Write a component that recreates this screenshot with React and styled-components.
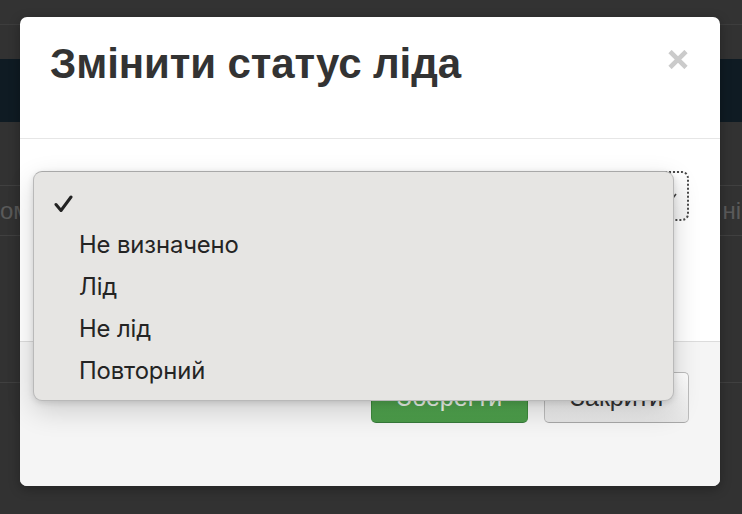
import React from "react";
import styled, { createGlobalStyle } from "styled-components";

const Global = createGlobalStyle`
  html, body { margin: 0; padding: 0; background: #323232; overflow: hidden; }
  * { box-sizing: border-box; }
`;

const Page = styled.div`
  position: relative;
  width: 742px;
  height: 514px;
  background: #323232;
  overflow: hidden;
  font-family: "Liberation Sans", Arial, sans-serif;
`;

const TopBar = styled.div`
  height: 25px;
  background: #333333;
  border-bottom: 1px solid #3d3d3d;
`;

const NavBand = styled.div`
  margin-top: 34px;
  height: 63px;
  background: #0f1b23;
`;

const TableRow = styled.div`
  margin-top: ${(p) => p.$gap}px;
  height: ${(p) => p.$h}px;
  border-top: 1px solid #404040;
  display: flex;
  align-items: center;
  justify-content: space-between;
  padding: 0 1px 0 0;
  color: #5a5a5a;
  font-size: 24px;
  white-space: nowrap;
`;

const Modal = styled.div`
  position: absolute;
  left: 20px;
  top: 17px;
  width: 700px;
  height: 469px;
  background: #fff;
  border-radius: 7px;
  display: flex;
  flex-direction: column;
  box-shadow: 0 3px 12px rgba(0, 0, 0, 0.3);
`;

const Header = styled.div`
  height: 122px;
  padding: 26px 30px 0 30px;
  border-bottom: 1px solid #e6e6e6;
  display: flex;
  justify-content: space-between;
  align-items: flex-start;
`;

const Title = styled.h3`
  margin: 0;
  font-family: "Liberation Sans", Arial, sans-serif;
  font-weight: 700;
  font-size: 42px;
  line-height: 42px;
  color: #333;
  letter-spacing: -0.1px;
`;

const CloseX = styled.svg`
  margin-top: 7px;
  margin-right: 2px;
  width: 20px;
  height: 19px;
  display: block;
`;

const Body = styled.div`
  height: 202px;
  padding: 32px 31px 0 30px;
`;

const Select = styled.div`
  height: 50px;
  border: 2px dotted #4a4a4a;
  border-radius: 7px;
  background: linear-gradient(#ffffff, #f4f4f4);
  display: flex;
  justify-content: flex-end;
  align-items: center;
  padding-right: 10px;
`;

const Footer = styled.div`
  flex: 1;
  background: #f5f5f5;
  border-top: 1px solid #dcdcdc;
  border-radius: 0 0 7px 7px;
  padding: 30px 31px 0 0;
  display: flex;
  justify-content: flex-end;
  align-items: flex-start;
  gap: 16px;
`;

const Button = styled.div`
  height: 51px;
  padding: 0 25px;
  border-radius: 5px;
  font-family: "Liberation Sans", Arial, sans-serif;
  font-size: 25px;
  display: flex;
  align-items: center;
  border: 1px solid ${(p) => (p.$primary ? "#3e8a3d" : "#bcbcbc")};
  border-bottom-color: ${(p) => (p.$primary ? "#36793a" : "#a8a8a8")};
  color: ${(p) => (p.$primary ? "#eef5ec" : "#333")};
  background: ${(p) =>
    p.$primary
      ? "linear-gradient(#5bb659, #4b9b49)"
      : "linear-gradient(#ffffff, #e6e6e6)"};
  width: ${(p) => p.$w}px;
  justify-content: center;
`;

const Dropdown = styled.div`
  position: absolute;
  left: 13px;
  top: 154px;
  width: 641px;
  height: 230px;
  background: #e6e5e3;
  border: 1px solid #b9b9b9;
  border-top-color: #a8a8a8;
  border-radius: 9px;
  padding-top: 13px;
  box-shadow: 0 10px 28px rgba(0, 0, 0, 0.16), 0 2px 6px rgba(0, 0, 0, 0.12);
  font-family: Inter, "Liberation Sans", sans-serif;
  color: #242424;
`;

const Option = styled.div`
  height: ${(p) => p.$h || 42}px;
  padding-left: ${(p) => (p.$check ? 20 : 45)}px;
  display: flex;
  align-items: center;
  font-size: 23.8px;
  letter-spacing: -0.1px;
`;

export default function App() {
  return (
    <Page>
      <Global />
      <TopBar />
      <NavBand />
      <TableRow $gap={63} $h={50}>
        <span>ом</span>
        <span>ні</span>
      </TableRow>
      <TableRow $gap={0} $h={147} />
      <TableRow $gap={0} $h={2} />
      <Modal>
        <Header>
          <Title>Змінити статус ліда</Title>
          <CloseX viewBox="0 0 20 19">
            <path d="M2 1.5 L18 17.5 M18 1.5 L2 17.5" stroke="#cbcbcb" strokeWidth="4.6" />
          </CloseX>
        </Header>
        <Body>
          <Select>
            <svg width="8" height="6" viewBox="0 0 8 6">
              <path d="M1 1 L4 5 L7 1" fill="none" stroke="#444" strokeWidth="1.6" />
            </svg>
          </Select>
        </Body>
        <Footer>
          <Button $primary $w={157}>Зберегти</Button>
          <Button $w={145}>Закрити</Button>
        </Footer>
        <Dropdown>
          <Option $check $h={38}>
            <svg width="19" height="18" viewBox="0 0 19 18">
              <path d="M2 9.5 L7 15.5 L17 2" fill="none" stroke="#222" strokeWidth="3" strokeLinecap="round" strokeLinejoin="round" />
            </svg>
          </Option>
          <Option>Не визначено</Option>
          <Option>Лід</Option>
          <Option>Не лід</Option>
          <Option>Повторний</Option>
        </Dropdown>
      </Modal>
    </Page>
  );
}
